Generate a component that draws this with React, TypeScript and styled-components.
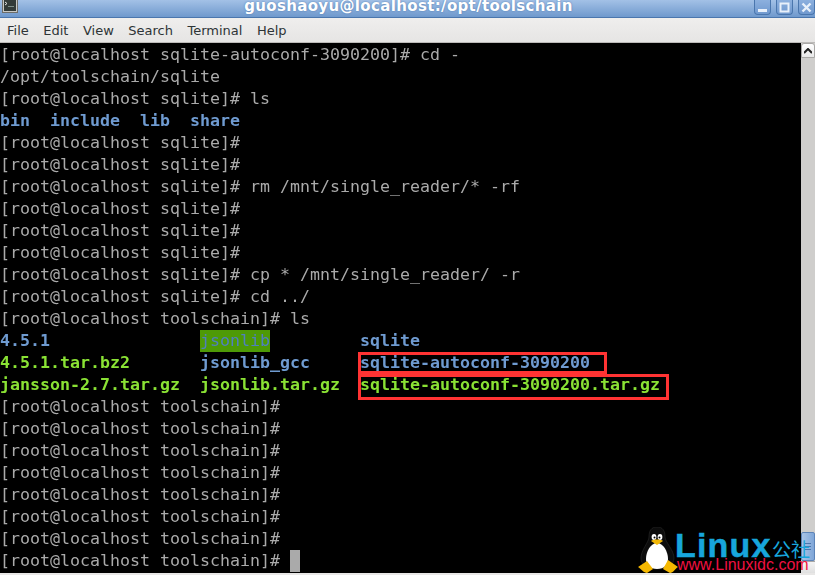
import React from "react";
import styled, { createGlobalStyle } from "styled-components";

const GlobalStyle = createGlobalStyle`
  html, body {
    margin: 0;
    padding: 0;
    background: #e8e7e6;
    overflow: hidden;
  }
`;

const Win = styled.div`
  position: relative;
  width: 815px;
  height: 575px;
  display: flex;
  flex-direction: column;
  overflow: hidden;
`;

const TitleBar = styled.div`
  height: 17px;
  flex: none;
  display: grid;
  grid-template-columns: 1fr auto 1fr;
  align-items: start;
  background: linear-gradient(#a3c1e6, #6f99cd);
  border-bottom: 1px solid #4a76ad;
  padding-left: 2px;
`;

const TitleText = styled.div`
  font: bold 15px/13px "DejaVu Sans", sans-serif;
  letter-spacing: 0.35px;
  color: #fff;
  text-shadow: 0 0 2px #4a76ad;
  white-space: nowrap;
`;

const WinIcon = styled.svg`
  display: block;
  width: 16px;
  height: 13px;
`;

const WinButtons = styled.div`
  display: flex;
  gap: 5px;
  justify-content: flex-end;
`;

const WinButton = styled.div`
  width: 17px;
  height: 15px;
  box-sizing: border-box;
  background: linear-gradient(#8cb0de, #7099cf);
  border: 1px solid #4a76ad;
  border-top: none;
  border-radius: 0 0 4px 4px;
  display: flex;
  align-items: center;
  justify-content: center;
`;

const MenuBar = styled.div`
  height: 24px;
  flex: none;
  display: flex;
  gap: 14.5px;
  align-items: center;
  padding-left: 7px;
  background: linear-gradient(#efeeed, #e6e5e4);
  border-bottom: 1px solid #bcbab8;
  font: 13px "DejaVu Sans", sans-serif;
  color: #2e3436;
`;

const Body = styled.div`
  height: 530px;
  flex: none;
  display: flex;
`;

const Terminal = styled.div`
  flex: 1;
  box-sizing: border-box;
  padding-top: 1px;
  background: #000;
  font: 16.62px/22px "DejaVu Sans Mono", monospace;
  color: #aaa;
  overflow: hidden;
  filter: blur(0.25px);
`;

const Line = styled.div`
  height: 22px;
  white-space: pre;
`;

const Dir = styled.span`
  color: #6f9bd1;
  font-weight: bold;
`;

const Arc = styled.span`
  color: #8ae234;
  font-weight: bold;
`;

const Sticky = styled.span`
  color: #4f7fc0;
  background: #4e9a06;
  display: inline-block;
  height: 22px;
`;

const Cursor = styled.span`
  display: inline-block;
  width: 10px;
  height: 22px;
  background: #aaa;
  vertical-align: top;
`;

const Scrollbar = styled.div`
  width: 14px;
  flex: none;
  display: flex;
  flex-direction: column;
  background: #cfcecc;
`;

const ScrollCap = styled.div`
  height: 15px;
  flex: none;
  box-sizing: border-box;
  background: linear-gradient(#fff, #e8e8e8);
  border: 1px solid #a9a8a6;
  border-radius: 3px 3px 0 0;
  display: flex;
  align-items: center;
  justify-content: center;
`;

const Thumb = styled.div`
  margin-top: auto;
  height: 29px;
  box-sizing: border-box;
  display: flex;
  flex-direction: column;
  justify-content: center;
  align-items: center;
  gap: 2px;
  background: linear-gradient(90deg, #a9c4e6, #7fa6d8);
  border: 1px solid #5d84b8;
  border-radius: 2px;
`;

const Grip = styled.div`
  width: 6px;
  height: 1px;
  background: #4a76ad;
`;

const ScrollFoot = styled.div`
  height: 11px;
  flex: none;
  background: linear-gradient(#f4f4f4, #e0e0e0);
  border-top: 1px solid #a9a8a6;
`;

const Highlight = styled.div<{ $left: number; $top: number; $width: number; $height: number }>`
  position: absolute;
  left: ${(p) => p.$left}px;
  top: ${(p) => p.$top}px;
  width: ${(p) => p.$width}px;
  height: ${(p) => p.$height}px;
  box-sizing: border-box;
  border: 3px solid #ff3333;
`;

const Watermark = styled.div`
  position: absolute;
  left: 638px;
  top: 527px;
  width: 177px;
  height: 48px;
`;

const PenguinSvg = styled.svg`
  position: absolute;
  left: 0;
  top: 0;
`;

const Brand = styled.span`
  position: absolute;
  left: 37px;
  top: -1px;
  font: bold 34px "Liberation Sans", sans-serif;
  letter-spacing: 1.2px;
  -webkit-text-stroke: 0.5px #17a6dc;
  color: #17a6dc;
`;

const BrandCn = styled.span`
  position: absolute;
  left: 134px;
  top: 12px;
  font: 19px/20px "Noto Sans CJK SC", sans-serif;
  color: #17a6dc;
  white-space: nowrap;
`;

const Site = styled.span`
  position: absolute;
  left: 39px;
  top: 29px;
  font: 16px "Liberation Sans", sans-serif;
  color: #f01040;
  white-space: nowrap;
`;

const prompts = (where: string, n: number) =>
  Array.from({ length: n }, (_, i) => <Line key={where + i}>{`[root@localhost ${where}]#`}</Line>);

const Penguin = () => (
  <PenguinSvg width="40" height="47" viewBox="0 0 40 47">
    <path d="M19 0c-6 0-8 4-8 10 0 5-8 13-8 21 0 7 6 11 16 11s17-4 17-11c0-8-9-16-9-21 0-6-2-10-8-10z" fill="#0c0c0c" stroke="#2a2a2a" strokeWidth="0.6" />
    <path d="M19 16c-6 0-11 8-11 16 0 6 4 10 11 10s11-4 11-10c0-8-5-16-11-16z" fill="#fff" />
    <ellipse cx="16" cy="10" rx="2.4" ry="3" fill="#fff" />
    <ellipse cx="22" cy="10" rx="2.4" ry="3" fill="#fff" />
    <circle cx="16.5" cy="10.5" r="1" fill="#000" />
    <circle cx="21.5" cy="10.5" r="1" fill="#000" />
    <path d="M13 14c2-2 10-2 12 0l-6 4z" fill="#f2b705" />
    <path d="M0 40l9-6 6 8-6 4c-3 0-6-4-9-6z" fill="#f5b800" />
    <path d="M40 40l-10-7-5 9 7 4c3 0 5-4 8-6z" fill="#f5b800" />
  </PenguinSvg>
);

export default function App() {
  return (
    <Win>
      <GlobalStyle />
      <TitleBar>
        <WinIcon viewBox="0 0 16 13">
          <rect x="0.5" y="-1" width="15" height="13.5" fill="#c8c8c4" stroke="#6d6d69" />
          <rect x="2" y="0" width="12" height="11" fill="#333b38" />
          <path d="M3 2l2 1.5L3 5" fill="none" stroke="#e6e6e6" />
          <rect x="6" y="6" width="6" height="1" fill="#7f8f88" />
        </WinIcon>
        <TitleText>guoshaoyu@localhost:/opt/toolschain</TitleText>
        <WinButtons>
          <WinButton>
            <svg width="11" height="11" viewBox="0 0 11 11"><rect x="1" y="7" width="9" height="3" fill="#e8f0fa" /></svg>
          </WinButton>
          <WinButton>
            <svg width="11" height="11" viewBox="0 0 11 11"><path d="M1.5 1.5h8v8h-8z" fill="none" stroke="#e8f0fa" strokeWidth="2" /></svg>
          </WinButton>
          <WinButton>
            <svg width="11" height="11" viewBox="0 0 11 11"><path d="M1.5 1.5l8 8M9.5 1.5l-8 8" stroke="#e8f0fa" strokeWidth="2.4" /></svg>
          </WinButton>
        </WinButtons>
      </TitleBar>
      <MenuBar>
        <span>File</span>
        <span>Edit</span>
        <span>View</span>
        <span>Search</span>
        <span>Terminal</span>
        <span>Help</span>
      </MenuBar>
      <Body>
        <Terminal>
          <Line>[root@localhost sqlite-autoconf-3090200]# cd -</Line>
          <Line>/opt/toolschain/sqlite</Line>
          <Line>[root@localhost sqlite]# ls</Line>
          <Line><Dir>bin</Dir>  <Dir>include</Dir>  <Dir>lib</Dir>  <Dir>share</Dir></Line>
          {prompts("sqlite", 2)}
          <Line>[root@localhost sqlite]# rm /mnt/single_reader/* -rf</Line>
          {prompts("sqlite", 3)}
          <Line>[root@localhost sqlite]# cp * /mnt/single_reader/ -r</Line>
          <Line>[root@localhost sqlite]# cd ../</Line>
          <Line>[root@localhost toolschain]# ls</Line>
          <Line><Dir>4.5.1</Dir>               <Sticky>jsonlib</Sticky>         <Dir>sqlite</Dir></Line>
          <Line><Arc>4.5.1.tar.bz2</Arc>       <Dir>jsonlib_gcc</Dir>     <Dir>sqlite-autoconf-3090200</Dir></Line>
          <Line><Arc>jansson-2.7.tar.gz</Arc>  <Arc>jsonlib.tar.gz</Arc>  <Arc>sqlite-autoconf-3090200.tar.gz</Arc></Line>
          {prompts("toolschain", 7)}
          <Line>[root@localhost toolschain]# <Cursor /></Line>
        </Terminal>
        <Scrollbar>
          <ScrollCap>
            <svg width="8" height="6" viewBox="0 0 8 6"><path d="M0 5l4-4 4 4" fill="none" stroke="#222" strokeWidth="2" /></svg>
          </ScrollCap>
          <Thumb>
            <Grip />
            <Grip />
            <Grip />
          </Thumb>
          <ScrollFoot />
        </Scrollbar>
      </Body>
      <Highlight $left={358} $top={352} $width={249} $height={22} />
      <Highlight $left={358} $top={374} $width={311} $height={26} />
      <Watermark>
        <Penguin />
        <Brand>Linux</Brand>
        <BrandCn>公社</BrandCn>
        <Site>www.Linuxidc.com</Site>
      </Watermark>
    </Win>
  );
}
